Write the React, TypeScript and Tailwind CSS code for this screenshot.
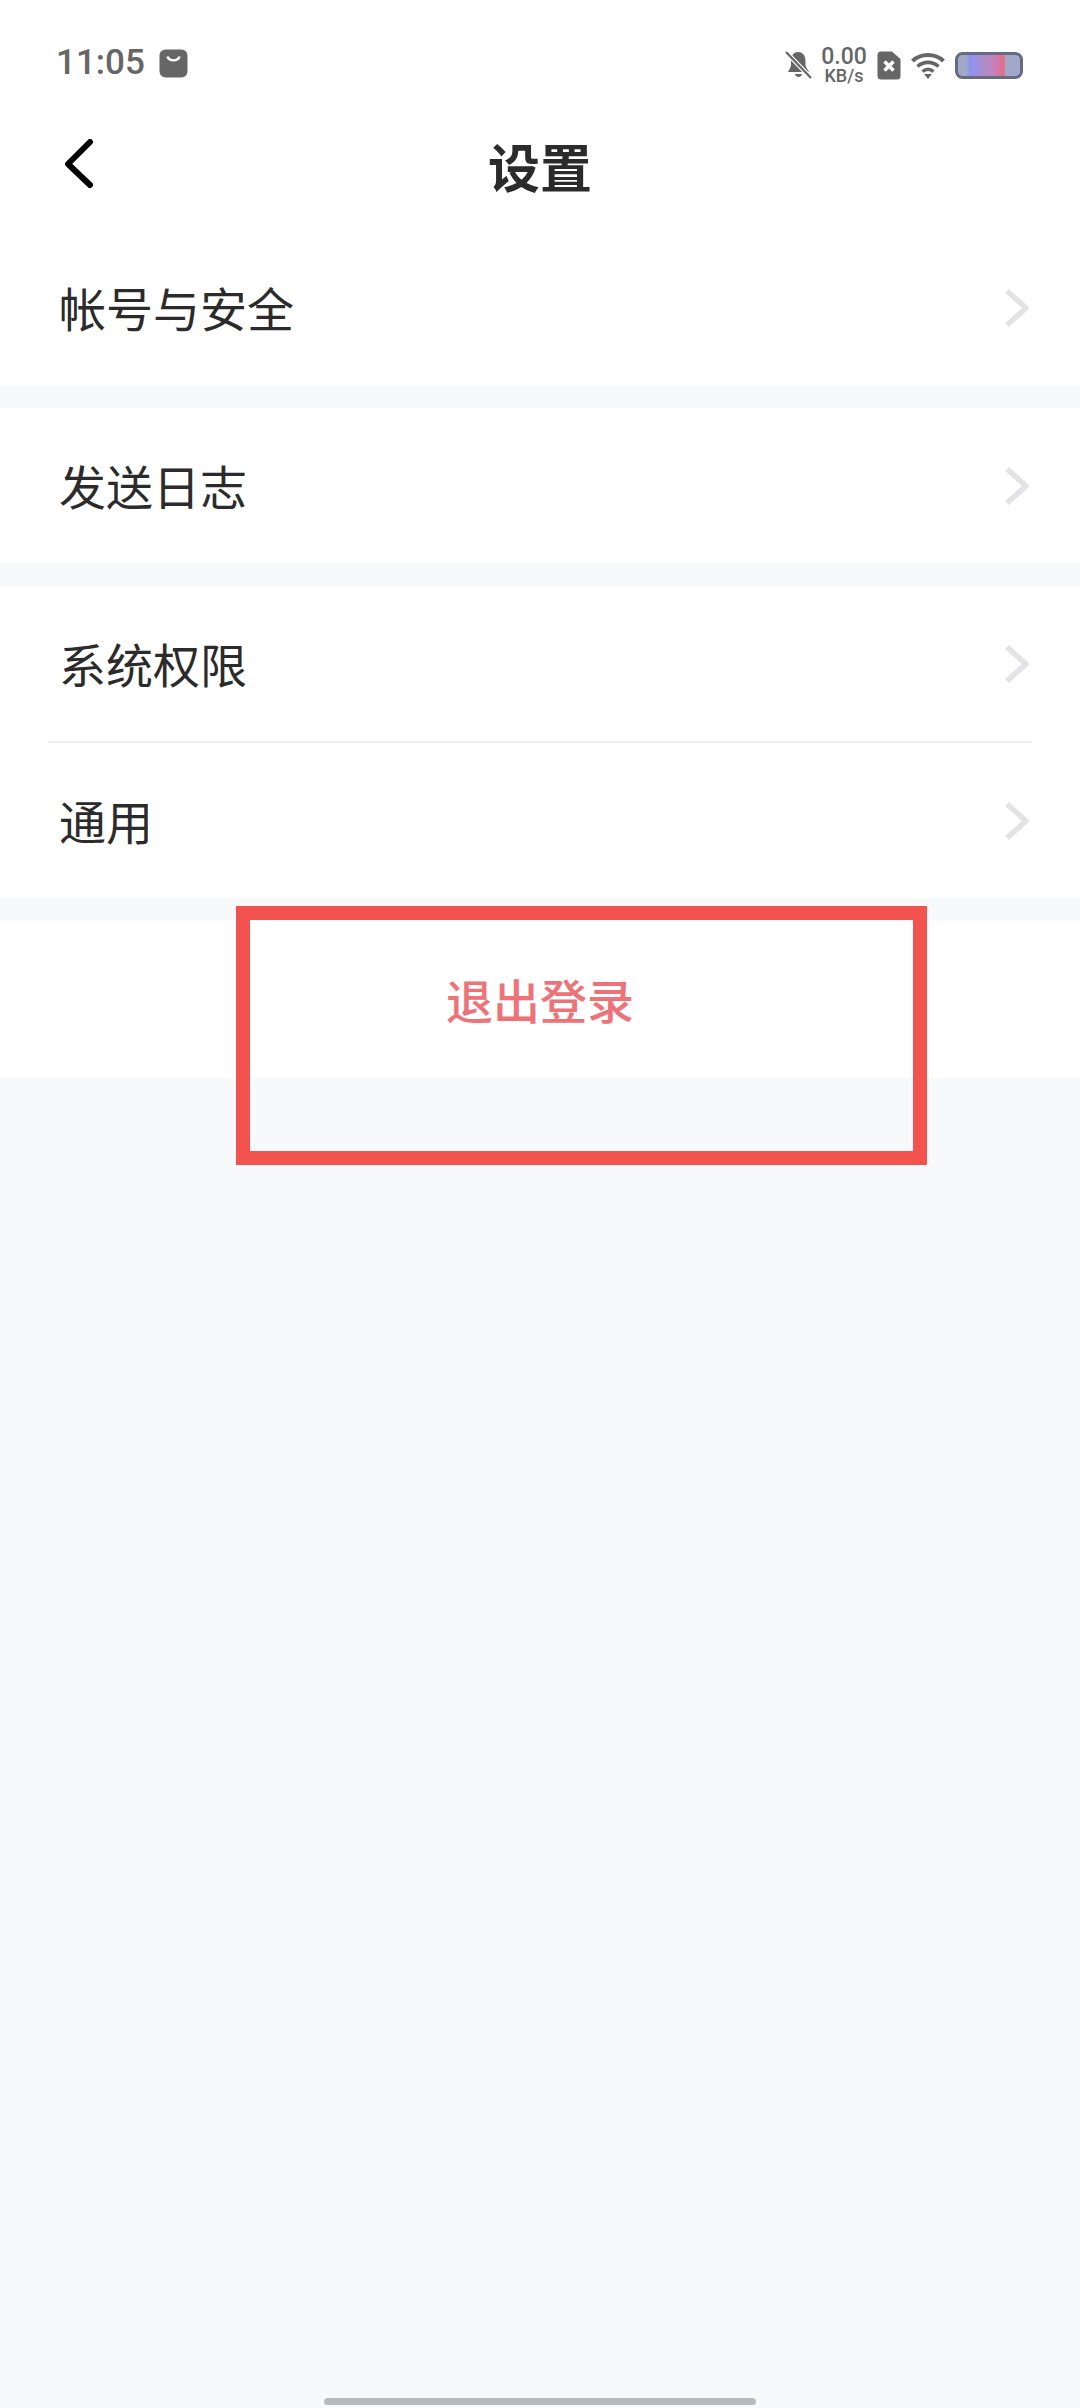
import React from "react"

const rowFont = "[font-family:'Noto_Sans_CJK_SC','Noto_Sans',sans-serif]"

const ChevronRight = () => (
  <svg width="26" height="40" viewBox="0 0 26 40" fill="none" className="shrink-0">
    <path d="M3 3 L22 20 L3 37" stroke="#e3e3e5" strokeWidth="5.5" strokeLinecap="butt" strokeLinejoin="round" />
  </svg>
)

const SettingRow = ({ label }: { label: string }) => (
  <div className="flex h-[155px] items-center justify-between pl-[59px] pr-[50px]">
    <span className="mb-[3px] text-[47px] leading-none text-[#2b2b2b]">{label}</span>
    <ChevronRight />
  </div>
)

const StatusBar = () => (
  <div className="flex h-[64px] items-start justify-between pl-[56px] pr-[57px] pt-[48px]">
    <div className="flex items-center gap-[14px]">
      <span className="font-['Roboto',sans-serif] text-[35px] font-medium leading-[30px] text-[#666666]">11:05</span>
      <svg width="29" height="29" viewBox="0 0 29 29">
        <rect x="0.5" y="0.5" width="28" height="28" rx="6" fill="#666666" />
        <path d="M8.5 7.5 C10 12.5 19 12.5 20.5 7.5" stroke="#ffffff" strokeWidth="2.6" fill="none" />
      </svg>
    </div>
    <div className="-mt-[2px] flex items-center">
      {/* muted bell */}
      <svg width="27" height="28" viewBox="0 0 27 28" className="mr-[9px]">
        <path d="M13 1 C18.5 1 20.5 5.5 20.5 10 L20.5 15 L24 21 L3 21 L6 15 L6 10 C6 5.5 8 1 13 1 Z" fill="#666666" />
        <path d="M10 23 L17 23 C16.5 27 10.5 27 10 23 Z" fill="#666666" />
        <path d="M1 1 L26 27" stroke="#ffffff" strokeWidth="4.5" />
        <path d="M1 1 L26 27" stroke="#666666" strokeWidth="2.2" />
      </svg>
      <div className="mr-[10px] flex w-[46px] flex-col items-center font-['Roboto',sans-serif] font-medium text-[#666666]">
        <span className="text-[23px] leading-[21px]">0.00</span>
        <span className="text-[18px] leading-[17px]">KB/s</span>
      </div>
      {/* sim card */}
      <svg width="24" height="29" viewBox="0 0 24 29" className="mr-[10px]">
        <path d="M4 0.5 L15 0.5 L23.5 8 L23.5 25 Q23.5 28.5 20 28.5 L4 28.5 Q0.5 28.5 0.5 25 L0.5 4 Q0.5 0.5 4 0.5 Z" fill="#666666" />
        <path d="M7.5 10.5 L16.5 19.5 M16.5 10.5 L7.5 19.5" stroke="#ffffff" strokeWidth="3.6" />
      </svg>
      <svg width="34" height="27" viewBox="0 0 34 27" className="mr-[10px]" fill="none">
        <path d="M1.5 9 C10 1 24 1 32.5 9" stroke="#666666" strokeWidth="4" />
        <path d="M6.5 14.5 C12.5 9 21.5 9 27.5 14.5" stroke="#666666" strokeWidth="3.6" />
        <path d="M11.5 19.5 C15 16.5 19 16.5 22.5 19.5" stroke="#666666" strokeWidth="3.4" />
        <path d="M13 22 L21 22 L17 27 Z" fill="#666666" />
      </svg>
      <svg width="68" height="27" viewBox="0 0 68 27">
        <defs>
          <linearGradient id="batteryFill" x1="0" y1="0" x2="1" y2="0">
            <stop offset="0" stopColor="#a2a9c8" />
            <stop offset="0.14" stopColor="#a2a9c8" />
            <stop offset="0.2" stopColor="#8f95e8" />
            <stop offset="0.3" stopColor="#9a8fe8" />
            <stop offset="0.4" stopColor="#a98cc8" />
            <stop offset="0.55" stopColor="#c084c0" />
            <stop offset="0.68" stopColor="#e0709a" />
            <stop offset="0.72" stopColor="#e36c80" />
            <stop offset="0.76" stopColor="#a2a9c8" />
            <stop offset="1" stopColor="#a2a9c8" />
          </linearGradient>
        </defs>
        <rect x="1.5" y="1.5" width="65" height="24" rx="6" fill="url(#batteryFill)" stroke="#666b80" strokeWidth="3" />
      </svg>
    </div>
  </div>
)

export default function App() {
  return (
    <div className={`relative flex h-[2408px] w-[1080px] flex-col overflow-hidden bg-[#f8f9fb] ${rowFont}`}>
      <div className="bg-white">
        <StatusBar />
        {/* nav bar */}
        <div className="relative flex h-[166px] justify-center pt-[76px]">
          <svg width="30" height="50" viewBox="0 0 30 50" fill="none" className="absolute left-[64px] top-[75px]">
            <path d="M26 3 L4 25 L26 46" stroke="#000000" strokeWidth="6" strokeLinecap="round" strokeLinejoin="round" />
          </svg>
          <h1 className="text-[52px] font-bold leading-none text-[#2b2b2b]">设置</h1>
        </div>
        <SettingRow label="帐号与安全" />
      </div>

      <div className="mt-[23px] bg-white">
        <SettingRow label="发送日志" />
      </div>

      <div className="mt-[23px] bg-white">
        <SettingRow label="系统权限" />
        <div className="mx-[48px] h-[2px] bg-[#eeeeee]" />
        <SettingRow label="通用" />
      </div>

      <div className="mt-[23px] flex h-[157px] items-center justify-center bg-white">
        <span className="mb-[3px] text-[47px] font-medium leading-none text-[#ee7379]">退出登录</span>
      </div>

      <div className="flex flex-1 items-end justify-center pb-[3px]">
        <div className="h-[7px] w-[432px] rounded-full bg-[#bababc]" />
      </div>

      {/* red annotation box */}
      <div className="absolute left-[236px] top-[906px] h-[259px] w-[691px] border-[14px] border-[#f2534e]" />
    </div>
  )
}
